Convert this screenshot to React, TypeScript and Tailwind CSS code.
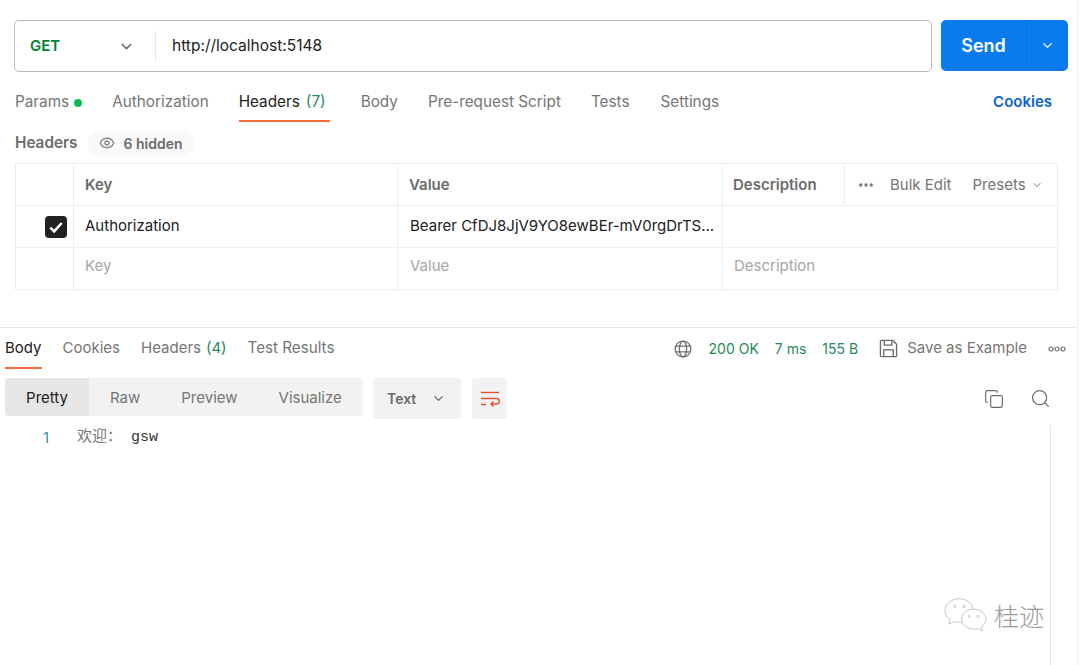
import { ChevronDown, Copy, Ellipsis, Eye, Search } from "lucide-react";

function WrapIcon() {
  return (
    <svg width="20" height="18" viewBox="0 0 20 18" fill="none" stroke="#e0522b" strokeWidth="1.4">
      <path d="M1 2.500h18" />
      <path d="M1 8.500h15.500a2.700 2.700 0 0 1 0 5.500H11" />
      <path d="M13.500 11.500L11 14l2.500 2.500" />
      <path d="M1 14.500h5" />
    </svg>
  );
}

function GlobeIcon() {
  return (
    <svg width="18" height="18" viewBox="0 0 20 20" fill="none" stroke="#6b6b6b" strokeWidth="1.4">
      <circle cx="10" cy="10" r="8.800" />
      <ellipse cx="10" cy="10" rx="4" ry="8.800" />
      <path d="M2 6.800h16M2 13.200h16" />
    </svg>
  );
}

function SaveIcon() {
  return (
    <svg width="19" height="19" viewBox="0 0 20 20" fill="none" stroke="#6b6b6b" strokeWidth="1.4">
      <path d="M2.500 1.500h12l4 4v12a1 1 0 0 1-1 1h-15a1 1 0 0 1-1-1v-15a1 1 0 0 1 1-1z" />
      <path d="M5.500 1.500v5h8v-5" />
      <path d="M5 18.500v-7h10v7" />
    </svg>
  );
}

function WeChatMark() {
  return (
    <svg width="44" height="36" viewBox="0 0 46 36" fill="white" stroke="#c4c4c4" strokeWidth="1">
      <path d="M16 1C7.500 1 1 6.500 1 13.500c0 4 2.200 7.400 5.600 9.700L5 27.500l5.500-2.600c1.700.5 3.500.8 5.500.8 8.500 0 14.500-5.500 14.500-12.200S24.500 1 16 1z" />
      <path d="M31 12c-7 0-12.500 4.600-12.500 10.300S24 32.600 31 32.600c1.500 0 3-.2 4.300-.6l4.700 2.500-1.200-4c3.200-1.900 5.200-4.900 5.200-8.200C43.500 16.600 38 12 31 12z" />
      <circle cx="11" cy="9" r="1.300" fill="none" />
      <circle cx="21" cy="9" r="1.300" fill="none" />
      <circle cx="26.500" cy="19.500" r="1" fill="none" />
      <circle cx="35.500" cy="19.500" r="1" fill="none" />
    </svg>
  );
}

function RequestTabs() {
  return (
    <div className="flex h-[50px] items-center pl-[15px] pr-[25px] pt-[11px] text-[15.3px] text-[#757575]">
      <span className="flex items-center">
        Params
        <span className="ml-[5px] size-[8px] rounded-full bg-[#0cbb52]" />
      </span>
      <span className="ml-[30px]">Authorization</span>
      <span className="relative ml-[30px] -mt-[11px] flex h-[50px] w-[91px] items-center pt-[11px] text-[#212121]">
        Headers <span className="ml-[6px] text-[#1d8a57]">(7)</span>
        <span className="absolute bottom-0 left-0 h-[2px] w-full bg-[#ff6c37]" />
      </span>
      <span className="ml-[31px]">Body</span>
      <span className="ml-[30px]">Pre-request Script</span>
      <span className="ml-[30px]">Tests</span>
      <span className="ml-[31px]">Settings</span>
      <span className="ml-auto text-[15px] font-semibold text-[#0b63ce]">Cookies</span>
    </div>
  );
}

function HeadersTable() {
  const cell = "flex items-center border-r border-[#ededed] px-[11px] last:border-r-0";
  const cols = "grid grid-cols-[58px_324px_325px_1fr]";
  return (
    <div className="ml-[15px] w-[1043px] border border-[#ededed] text-[15px]">
      <div className={`${cols} h-[42px] border-b border-[#ededed] pt-px font-semibold text-[#6b6b6b]`}>
        <div className={cell} />
        <div className={cell}>Key</div>
        <div className={cell}>Value</div>
        <div className="flex items-center">
          <div className="flex h-full w-[122px] items-center border-r border-[#ededed] pl-[10px]">Description</div>
          <div className="flex items-center pl-[12px] font-normal text-[#757575]">
            <Ellipsis size={18} strokeWidth={2.4} />
            <span className="ml-[15px]">Bulk Edit</span>
            <span className="ml-[21px]">Presets</span>
            <ChevronDown size={12} className="ml-[5px]" />
          </div>
        </div>
      </div>
      <div className={`${cols} h-[42px] border-b border-[#ededed] text-[#212121]`}>
        <div className={`${cell} justify-center pl-[23px] pr-0`}>
          <span className="flex size-[22px] items-center justify-center rounded-[4px] bg-[#212121]">
            <svg width="16" height="16" viewBox="0 0 14 14" fill="none" stroke="white" strokeWidth="2.200">
              <path d="M2 7.500l3.400 3.400L12 3.500" />
            </svg>
          </span>
        </div>
        <div className={cell}>Authorization</div>
        <div className={`${cell} pl-[12px] pr-0`}>
          <span className="whitespace-nowrap">Bearer CfDJ8JjV9YO8ewBEr-mV0rgDrTS...</span>
        </div>
        <div />
      </div>
      <div className={`${cols} h-[41px] pb-[5px] text-[#a6a6a6]`}>
        <div className={`${cell} -mb-[5px]`} />
        <div className={`${cell} -mb-[5px] pb-[5px]`}>Key</div>
        <div className={`${cell} -mb-[5px] pb-[5px] pl-[12px]`}>Value</div>
        <div className="flex items-center px-[11px]">Description</div>
      </div>
    </div>
  );
}

function ResponseBar() {
  return (
    <div className="flex h-[41px] items-stretch pl-[5px] pr-[11px] text-[15px] text-[#757575]">
      <span className="relative flex items-center text-[#212121]">
        Body
        <span className="absolute bottom-0 left-0 h-[2px] w-full bg-[#ff6c37]" />
      </span>
      <span className="ml-[21px] flex items-center">Cookies</span>
      <span className="ml-[21px] flex items-center">
        Headers <span className="ml-[5px] text-[#1d8a57]">(4)</span>
      </span>
      <span className="ml-[21px] flex items-center text-[15.2px]">Test Results</span>
      <div className="ml-auto flex items-center">
        <GlobeIcon />
        <span className="ml-[17px] text-[14px] text-[#1d8a57]">200 OK</span>
        <span className="ml-[16px] text-[14px] text-[#1d8a57]">7 ms</span>
        <span className="ml-[16px] text-[14px] text-[#1d8a57]">155 B</span>
        <span className="ml-[21px]">
          <SaveIcon />
        </span>
        <span className="ml-[9px]">Save as Example</span>
        <svg className="ml-[21px]" width="18" height="6" viewBox="0 0 18 6" fill="none" stroke="#6b6b6b" strokeWidth="1.200">
          <circle cx="3" cy="3" r="2" />
          <circle cx="9" cy="3" r="2" />
          <circle cx="15" cy="3" r="2" />
        </svg>
      </div>
    </div>
  );
}

function ResponseToolbar() {
  return (
    <div className="mt-[9px] flex items-start pl-[5px] pr-[26px] text-[15px]">
      <div className="flex h-[38px] w-[358px] items-center rounded-[4px] bg-[#f2f2f2] pt-[2px] text-[#757575]">
        <span className="-mt-[2px] flex h-[38px] w-[84px] items-center justify-center rounded-l-[4px] bg-[#e6e6e6] pt-[2px] text-[#212121]">Pretty</span>
        <span className="ml-[21px]">Raw</span>
        <span className="ml-[41px]">Preview</span>
        <span className="ml-[41px]">Visualize</span>
      </div>
      <div className="ml-[10px] flex h-[41px] w-[88px] items-center rounded-[4px] bg-[#f2f2f2] pl-[14px] text-[14px] font-semibold text-[#6b6b6b]">
        Text
        <ChevronDown size={15} className="ml-[15px]" />
      </div>
      <div className="ml-[11px] flex h-[41px] w-[35px] items-center justify-center rounded-[4px] bg-[#f2f2f2]">
        <WrapIcon />
      </div>
      <div className="ml-auto flex h-[41px] items-center text-[#6b6b6b]">
        <Copy size={20} strokeWidth={1.4} />
        <Search size={21} strokeWidth={1.4} className="ml-[26px]" />
      </div>
    </div>
  );
}

export default function App() {
  return (
    <div className="relative h-[665px] w-[1078px] overflow-hidden border-r border-[#ececec] bg-white font-['Inter',sans-serif]">
      <div className="flex gap-[9px] pl-[14px] pt-5">
        <div className="flex h-[52px] w-[918px] items-center rounded-[5px] border border-[#b8b8b8] text-[15.500px]">
          <div className="flex h-[31px] w-[141px] items-center border-r border-[#e6e6e6] pl-[15px] pr-[20px]">
            <span className="text-[15px] font-semibold text-[#007f31]">GET</span>
            <ChevronDown size={17} className="ml-auto text-[#6b6b6b]" />
          </div>
          <span className="ml-[16px] text-[#212121]">http://localhost:5148</span>
        </div>
        <div className="flex h-[51px] w-[127px] rounded-[5px] bg-[#097bed] text-white">
          <div className="flex w-[86px] items-center justify-center border-r border-[#0a72dc] text-[18px] font-semibold">Send</div>
          <div className="flex flex-1 items-center justify-center">
            <ChevronDown size={15} />
          </div>
        </div>
      </div>

      <RequestTabs />

      <div className="flex h-[41px] items-center pl-[15px] pt-[1px] text-[15.300px] font-semibold text-[#6b6b6b]">
        <span className="pt-px">Headers</span>
        <span className="ml-[11px] flex h-[25px] w-[107px] items-center rounded-full bg-[#f9f9f9] pl-[11px] text-[14px]">
          <Eye size={16} strokeWidth={2.200} className="mr-[8px] text-[#8c8c8c]" />
          6 hidden
        </span>
      </div>

      <HeadersTable />

      <div className="mt-[37px] border-t border-[#e6e6e6]">
        <ResponseBar />
        <ResponseToolbar />
        <div className="mt-[6px] flex">
          <div className="flex h-[240px] flex-1 pl-[43px] pt-[2px] font-['Liberation_Mono','Noto_Sans_CJK_SC',monospace] text-[15px]">
            <span className="w-[34px] font-['Inter',sans-serif] text-[#3f8fb0]">1</span>
            <span className="text-[#333]">
              <span className="text-[#777]">欢迎：</span> gsw
            </span>
          </div>
          <div className="mr-[26px] h-[240px] w-px bg-[#e6e6e6]" />
        </div>
      </div>

      <div className="absolute left-[944px] top-[597px] flex items-center">
        <WeChatMark />
        <span className="ml-[6px] font-['Noto_Sans_CJK_SC',sans-serif] text-[25px] font-light leading-none text-[#999]">桂迹</span>
      </div>
    </div>
  );
}
